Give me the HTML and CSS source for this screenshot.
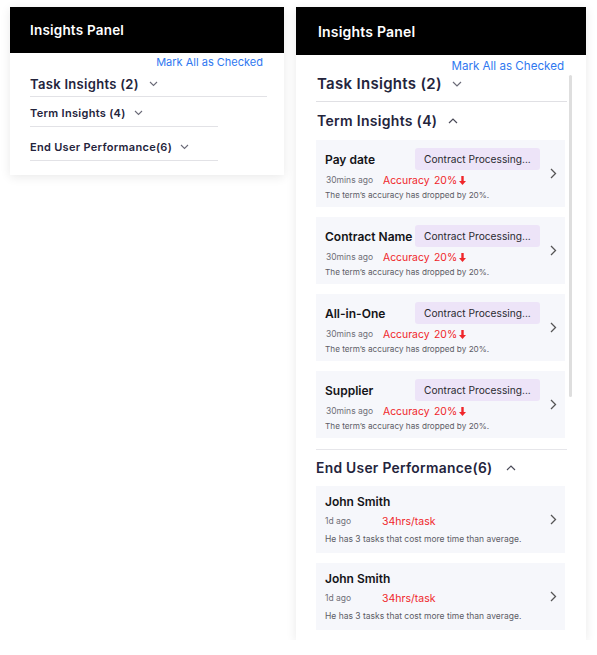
FILE: index.html
```html
<!DOCTYPE html>
<html>
<head>
<meta charset="utf-8">
<link rel="stylesheet" href="styles.css">
</head>
<body>
<div class="page">
  <div class="panel panel-small">
    <div class="header">Insights Panel</div>
    <div class="body-small">
      <div class="mark">Mark All as Checked</div>
      <div class="sec sec-task-s">
        <span class="sec-title t-task-s">Task Insights (2)</span>
        <svg class="chev" width="9" height="6" viewBox="0 0 9 6"><path d="M1 1l3.5 3.5L8 1" fill="none" stroke="#6b6b78" stroke-width="1.1"/></svg>
      </div>
      <div class="sec sec-sub-s sub-a">
        <span class="sec-title t-sub-s">Term Insights (4)</span>
        <svg class="chev" width="9" height="6" viewBox="0 0 9 6"><path d="M1 1l3.5 3.5L8 1" fill="none" stroke="#6b6b78" stroke-width="1.1"/></svg>
      </div>
      <div class="sec sec-sub-s sub-b">
        <span class="sec-title t-sub-s">End User Performance(6)</span>
        <svg class="chev" width="9" height="6" viewBox="0 0 9 6"><path d="M1 1l3.5 3.5L8 1" fill="none" stroke="#6b6b78" stroke-width="1.1"/></svg>
      </div>
    </div>
  </div>

  <div class="panel panel-big">
    <div class="header header-big">Insights Panel</div>
    <div class="mark mark-big">Mark All as Checked</div>
    <div class="scroll">
      <div class="scrollbar"></div>
      <div class="sec sec-task">
        <span class="sec-title t-task">Task Insights (2)</span>
        <svg class="chev" width="10" height="6" viewBox="0 0 10 6"><path d="M1 1l4 4 4-4" fill="none" stroke="#6b6b78" stroke-width="1.2"/></svg>
      </div>

      <div class="group">
        <div class="group-head">
          <span class="sec-title t-term">Term Insights (4)</span>
          <svg class="chev" width="10" height="6" viewBox="0 0 10 6"><path d="M1 5l4-4 4 4" fill="none" stroke="#4a4a58" stroke-width="1.2"/></svg>
        </div>

        <div class="card">
          <div class="card-main">
            <div class="row1"><span class="name">Pay date</span><span class="badge">Contract Processing...</span></div>
            <div class="row2"><span class="ago">30mins ago</span><span class="acc">Accuracy</span><span class="pct">20%<svg width="7" height="9" viewBox="0 0 7 9"><path d="M2.3 0h2.4v5H7L3.5 9 0 5h2.3z" fill="#f0262a"/></svg></span></div>
            <div class="row3">The term’s accuracy has dropped by 20%.</div>
          </div>
          <svg class="arrow" width="7" height="11" viewBox="0 0 7 11"><path d="M1 1l4.5 4.5L1 10" fill="none" stroke="#555" stroke-width="1.3"/></svg>
        </div>

        <div class="card">
          <div class="card-main">
            <div class="row1"><span class="name">Contract Name</span><span class="badge">Contract Processing...</span></div>
            <div class="row2"><span class="ago">30mins ago</span><span class="acc">Accuracy</span><span class="pct">20%<svg width="7" height="9" viewBox="0 0 7 9"><path d="M2.3 0h2.4v5H7L3.5 9 0 5h2.3z" fill="#f0262a"/></svg></span></div>
            <div class="row3">The term’s accuracy has dropped by 20%.</div>
          </div>
          <svg class="arrow" width="7" height="11" viewBox="0 0 7 11"><path d="M1 1l4.5 4.5L1 10" fill="none" stroke="#555" stroke-width="1.3"/></svg>
        </div>

        <div class="card">
          <div class="card-main">
            <div class="row1"><span class="name">All-in-One</span><span class="badge">Contract Processing...</span></div>
            <div class="row2"><span class="ago">30mins ago</span><span class="acc">Accuracy</span><span class="pct">20%<svg width="7" height="9" viewBox="0 0 7 9"><path d="M2.3 0h2.4v5H7L3.5 9 0 5h2.3z" fill="#f0262a"/></svg></span></div>
            <div class="row3">The term’s accuracy has dropped by 20%.</div>
          </div>
          <svg class="arrow" width="7" height="11" viewBox="0 0 7 11"><path d="M1 1l4.5 4.5L1 10" fill="none" stroke="#555" stroke-width="1.3"/></svg>
        </div>

        <div class="card">
          <div class="card-main">
            <div class="row1"><span class="name">Supplier</span><span class="badge">Contract Processing...</span></div>
            <div class="row2"><span class="ago">30mins ago</span><span class="acc">Accuracy</span><span class="pct">20%<svg width="7" height="9" viewBox="0 0 7 9"><path d="M2.3 0h2.4v5H7L3.5 9 0 5h2.3z" fill="#f0262a"/></svg></span></div>
            <div class="row3">The term’s accuracy has dropped by 20%.</div>
          </div>
          <svg class="arrow" width="7" height="11" viewBox="0 0 7 11"><path d="M1 1l4.5 4.5L1 10" fill="none" stroke="#555" stroke-width="1.3"/></svg>
        </div>
      </div>

      <div class="group group-users">
        <div class="group-head head-users">
          <span class="sec-title t-users">End User Performance(6)</span>
          <svg class="chev" width="10" height="6" viewBox="0 0 10 6"><path d="M1 5l4-4 4 4" fill="none" stroke="#4a4a58" stroke-width="1.2"/></svg>
        </div>

        <div class="card ucard">
          <div class="card-main">
            <div class="urow1"><span class="name">John Smith</span></div>
            <div class="urow2"><span class="ago">1d ago</span><span class="hrs">34hrs/task</span></div>
            <div class="urow3">He has 3 tasks that cost more time than average.</div>
          </div>
          <svg class="arrow" width="7" height="11" viewBox="0 0 7 11"><path d="M1 1l4.5 4.5L1 10" fill="none" stroke="#555" stroke-width="1.3"/></svg>
        </div>

        <div class="card ucard">
          <div class="card-main">
            <div class="urow1"><span class="name">John Smith</span></div>
            <div class="urow2"><span class="ago">1d ago</span><span class="hrs">34hrs/task</span></div>
            <div class="urow3">He has 3 tasks that cost more time than average.</div>
          </div>
          <svg class="arrow" width="7" height="11" viewBox="0 0 7 11"><path d="M1 1l4.5 4.5L1 10" fill="none" stroke="#555" stroke-width="1.3"/></svg>
        </div>
      </div>
    </div>
  </div>
</div>
</body>
</html>
```

FILE: styles.css
```css
* { box-sizing: border-box; }
html, body { margin: 0; padding: 0; background: #fff; }
body { font-family: Inter, "Noto Sans", "Liberation Sans", sans-serif; color: #222; }

.page {
  display: flex;
  align-items: flex-start;
  gap: 12px;
  padding: 7px 0 0 10px;
}

.panel {
  background: #fff;
  box-shadow: 0 2px 10px rgba(0, 0, 0, 0.09);
}

.panel-small { width: 274px; padding-bottom: 14px; }
.panel-big { width: 290px; height: 633px; position: relative; }

.header {
  background: #000;
  color: #fff;
  height: 46px;
  display: flex;
  align-items: center;
  padding-left: 20px;
  font-size: 13.5px;
  font-weight: 600;
  letter-spacing: 0.2px;
}
.header-big { height: 48px; padding-left: 22px; font-size: 14px; }

.mark {
  color: #2f78f0;
  font-size: 11px;
  line-height: 14px;
  text-align: right;
}

.body-small { padding: 2px 17px 0 20px; }
.body-small .mark { padding-right: 4px; }

.sec { display: flex; align-items: center; gap: 10px; }
.sec-title { font-weight: 600; color: #24243c; letter-spacing: 0.3px; }
.chev { display: block; flex: none; }

.sec-task-s { height: 28px; border-bottom: 1px solid #e2e2e6; padding-top: 3px; }
.t-task-s { font-size: 13px; }
.sec-sub-s { width: 188px; border-bottom: 1px solid #e2e2e6; gap: 8px; }
.sub-a { height: 30px; padding-top: 2px; }
.sub-b { height: 34px; padding-top: 6px; }
.t-sub-s { font-size: 11px; }

/* big panel */
.mark-big { font-size: 11.6px; margin-top: 4px; padding-right: 22px; }
.scroll { position: relative; padding: 0 21px 0 20px; }
.scrollbar {
  position: absolute;
  right: 14px;
  top: 2px;
  width: 3px;
  height: 322px;
  background: #dedede;
  border-radius: 2px;
}

.sec-task {
  height: 29px;
  margin-right: -2px;
  border-bottom: 1px solid #e0e0e4;
  padding-bottom: 7px;
  padding-left: 1px;
}
.t-task { font-size: 15px; }

.group-head { display: flex; align-items: center; gap: 11px; height: 38px; padding-left: 1px; padding-bottom: 1px; }
.t-term { font-size: 14px; }

.card {
  background: #f6f7fb;
  height: 67px;
  margin-bottom: 10px;
  display: flex;
  align-items: center;
  padding: 0 8px 0 9px;
}
.card-main { flex: 1; align-self: stretch; }
.arrow { display: block; flex: none; }

.row1 { display: flex; align-items: center; height: 22px; margin-top: 8px; }
.name { font-size: 12px; font-weight: 600; color: #141418; width: 90px; flex: none; white-space: nowrap; }
.badge {
  width: 125px;
  height: 22px;
  background: #ede4f8;
  border-radius: 3px;
  font-size: 10.2px;
  color: #2a2a30;
  display: flex;
  align-items: center;
  padding-left: 9px;
}

.row2 { display: flex; align-items: center; height: 14px; margin-top: 3px; padding-left: 1px; }
.ago { font-size: 8.5px; color: #6f6f78; width: 57px; flex: none; }
.acc { font-size: 10.4px; color: #f0262a; width: 51px; flex: none; }
.pct { font-size: 10.4px; color: #f0262a; display: flex; align-items: center; gap: 2px; }
.row3 { font-size: 8.2px; color: #5d5d66; line-height: 12px; margin-top: 2px; }

.card:last-child { margin-bottom: 0; }

.group-users { margin-top: 11px; border-top: 1px solid #e6e6ea; margin-right: -2px; }
.group-users .card { margin-right: 2px; }
.head-users { height: 36px; padding-left: 0; gap: 14px; }
.t-users { font-size: 13.8px; }
.ucard { margin-bottom: 10px; }

.urow1 { height: 18px; margin-top: 6px; display: flex; align-items: center; }
.urow2 { display: flex; align-items: center; height: 14px; margin-top: 4px; }
.hrs { font-size: 10.5px; color: #f0262a; }
.urow3 { font-size: 8.5px; color: #5d5d66; line-height: 12px; margin-top: 5px; }
```
